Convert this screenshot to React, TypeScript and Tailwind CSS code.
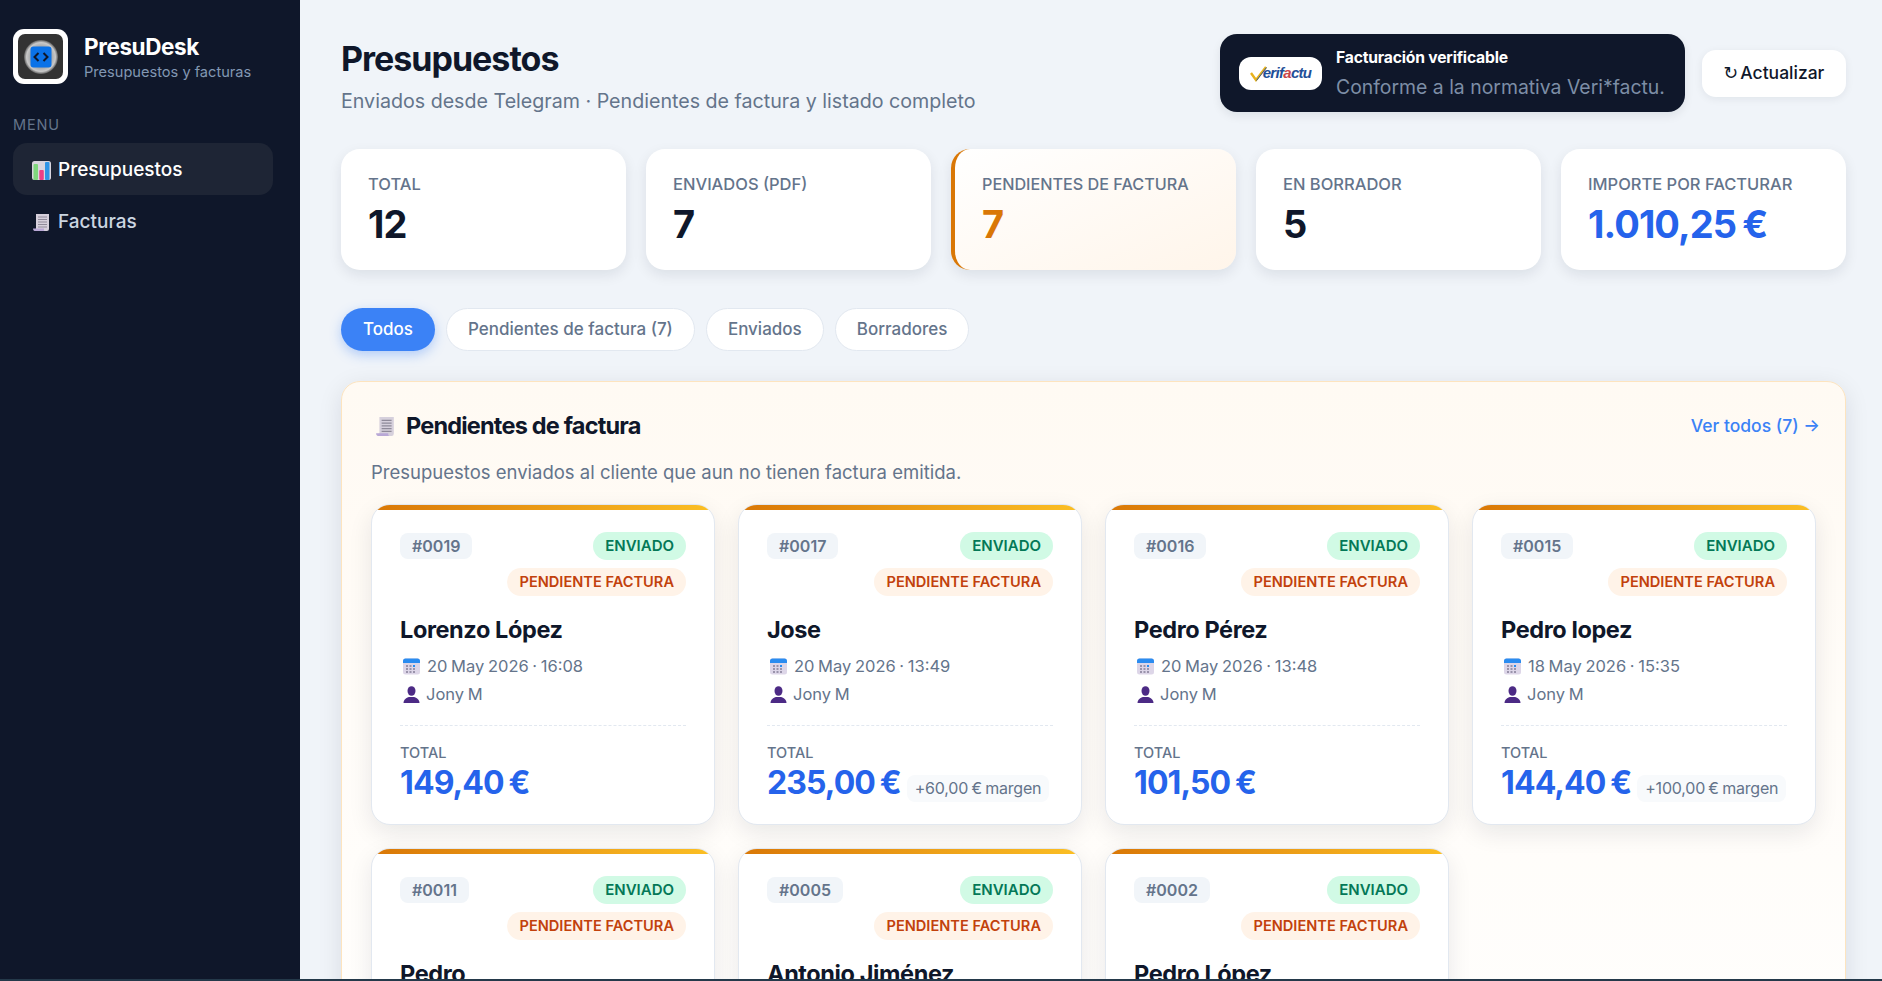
import React from 'react';

const font = { fontFamily: 'Inter, "Noto Sans", sans-serif' };

const stats = [
  { label: 'TOTAL', value: '12', tone: 'text-[#0f172a]' },
  { label: 'ENVIADOS (PDF)', value: '7', tone: 'text-[#0f172a]' },
  { label: 'PENDIENTES DE FACTURA', value: '7', tone: 'text-[#d97706]', accent: true },
  { label: 'EN BORRADOR', value: '5', tone: 'text-[#0f172a]' },
  { label: 'IMPORTE POR FACTURAR', value: '1.010,25 €', tone: 'text-[#2563eb]' },
];

const cards = [
  { id: '#0019', name: 'Lorenzo López', date: '20 May 2026 · 16:08', total: '149,40 €' },
  { id: '#0017', name: 'Jose', date: '20 May 2026 · 13:49', total: '235,00 €', margin: '+60,00 € margen' },
  { id: '#0016', name: 'Pedro Pérez', date: '20 May 2026 · 13:48', total: '101,50 €' },
  { id: '#0015', name: 'Pedro lopez', date: '18 May 2026 · 15:35', total: '144,40 €', margin: '+100,00 € margen' },
  { id: '#0011', name: 'Pedro', date: '15 May 2026 · 10:12', total: '98,00 €' },
  { id: '#0005', name: 'Antonio Jiménez', date: '12 May 2026 · 09:30', total: '120,00 €' },
  { id: '#0002', name: 'Pedro López', date: '10 May 2026 · 12:20', total: '162,45 €' },
];

const ChartIcon = () => (
  <svg width="19" height="19" viewBox="0 0 19 19" className="shrink-0">
    <rect width="19" height="19" rx="2.5" fill="#d9d5de" />
    <rect x="1.5" y="3" width="4.5" height="16" rx="1" fill="#7fd67c" />
    <rect x="7.3" y="9" width="4.5" height="10" rx="1" fill="#ec3f86" />
    <rect x="13" y="1" width="4.5" height="18" rx="1" fill="#2f95e6" />
  </svg>
);

const ScrollIcon = ({ size = 19 }: { size?: number }) => (
  <svg width={size} height={size} viewBox="0 0 19 19" className="shrink-0">
    <path d="M4 1h13v15a2 2 0 0 1-2 2H1.5c1.5-.5 2.5-1 2.5-3z" fill="#d6d0dc" />
    <path d="M1 15.5h11v1.2c0 .8.5 1.3 1 1.3H3c-1.2 0-2-.9-2-2.5z" fill="#b9a8d6" />
    <path d="M6 4h9M6 6.5h9M6 9h9M6 11.500h9M6 14h9" stroke="#8f8a99" strokeWidth="1.100" />
  </svg>
);

const CalendarIcon = () => (
  <svg width="17" height="17" viewBox="0 0 17 17" className="shrink-0">
    <rect y="0.500" width="17" height="16" rx="2.500" fill="#ddd6e8" />
    <path d="M0 5V3a2.500 2.500 0 0 1 2.500-2.500h12A2.500 2.500 0 0 1 17 3v2z" fill="#2b8cf0" />
    <g fill="#9a93ab">
      <rect x="3" y="7" width="2" height="2" />
      <rect x="6.500" y="7" width="2" height="2" />
      <rect x="3" y="10" width="2" height="2" />
      <rect x="6.500" y="10" width="2" height="2" />
      <rect x="10" y="10" width="2" height="2" />
      <rect x="3" y="13" width="2" height="2" />
      <rect x="6.500" y="13" width="2" height="2" />
      <rect x="10" y="13" width="2" height="2" />
    </g>
    <rect x="10" y="7" width="2" height="2" fill="#2b8cf0" />
  </svg>
);

const PersonIcon = () => (
  <svg width="17" height="17" viewBox="0 0 17 17" className="shrink-0">
    <ellipse cx="8.500" cy="5" rx="4" ry="4.800" fill="#4c2a85" />
    <path d="M0.500 17c0-3.500 3-5.500 5.500-6h5c2.500.5 5.500 2.500 5.500 6z" fill="#4c2a85" />
  </svg>
);

const AppLogo = () => (
  <svg width="55" height="55" viewBox="0 0 55 55" className="shrink-0">
    <defs>
      <radialGradient id="halo">
        <stop offset="45%" stopColor="#8d9094" />
        <stop offset="85%" stopColor="#c9c9c9" />
        <stop offset="100%" stopColor="#5d5d5d" />
      </radialGradient>
    </defs>
    <rect width="55" height="55" rx="11" fill="#ffffff" />
    <rect x="5" y="5" width="45" height="45" rx="7" fill="#333333" />
    <circle cx="28" cy="28" r="17" fill="url(#halo)" />
    <rect x="17.500" y="17.500" width="21" height="21" rx="3" fill="#0a72e8" />
    <path d="M25.500 24l-4 4 4 4M30.500 24l4 4-4 4" fill="none" stroke="#0f172a" strokeWidth="2" />
  </svg>
);

const VerifactuLogo = () => (
  <div className="flex h-[33px] w-[83px] shrink-0 items-center justify-center rounded-xl bg-white">
    <svg width="18" height="17" viewBox="0 0 18 17" className="-mr-[5px] shrink-0">
      <path d="M1 8l5 7 10-13" fill="none" stroke="#e8b21c" strokeWidth="2.400" />
      <path d="M6.500 15.500L16.500 2.500" fill="none" stroke="#1f4f98" strokeWidth="0.900" />
    </svg>
    <span className="relative text-[15px] font-bold italic tracking-[-0.7px] text-[#1f4f98]" style={{ fontFamily: '"Liberation Sans", sans-serif' }}>
      erif<span className="text-[#c8464a]">a</span>ctu
    </span>
  </div>
);

const StatCard = ({ label, value, tone, accent }: { label: string; value: string; tone: string; accent?: boolean }) => (
  <div
    className={`flex h-[121px] flex-col rounded-[19px] pt-[24px] shadow-[0_5px_14px_rgba(15,23,42,0.09)] ${
      accent
        ? 'border-l-[4px] border-[#d97706] bg-gradient-to-br from-white to-[#fff5ea] pl-[27px]'
        : 'bg-white pl-[27px]'
    }`}
  >
    <div className={`leading-[22px] font-medium text-[#64748b] ${accent ? 'text-[16.200px]' : 'text-[16.500px]'}`}>{label}</div>
    <div className={`mt-[6px] text-[38px] leading-[46px] font-bold tracking-[-0.9px] [word-spacing:-2px] ${tone}`}>{value}</div>
  </div>
);

const Tab = ({ children, active }: { children: React.ReactNode; active?: boolean }) => (
  <button
    className={`flex h-[43px] items-center rounded-full pt-px text-[17px] font-medium ${
      active
        ? 'bg-[#3b82f6] px-[22px] text-white shadow-[0_4px_12px_rgba(59,130,246,0.35)]'
        : 'border border-[#e2e8f0] bg-white px-[21px] text-[#64748b]'
    }`}
  >
    {children}
  </button>
);

const BudgetCard = ({ id, name, date, total, margin }: { id: string; name: string; date: string; total: string; margin?: string }) => (
  <div className="h-[321px] overflow-hidden rounded-[19px] border border-[#e2e8f0] bg-white shadow-[0_8px_24px_rgba(15,23,42,0.09)]">
    <div className="h-[5px] bg-gradient-to-r from-[#d97706] to-[#fbbf24]" />
    <div className="px-[28px] pt-[22px]">
      <div className="flex items-start justify-between">
        <span className="mt-px rounded-lg bg-[#f1f5f9] px-[12px] text-[16px] leading-[26px] font-semibold text-[#64748b]">{id}</span>
        <div className="flex flex-col items-end gap-[8px]">
          <span className="rounded-full bg-[#d1fae5] px-[12px] text-[15px] leading-[28px] font-semibold text-[#047857]">ENVIADO</span>
          <span className="rounded-full bg-[#fff3e8] px-[12px] text-[14.600px] leading-[28px] font-semibold text-[#c2410c]">PENDIENTE FACTURA</span>
        </div>
      </div>
      <div className="mt-[17px] text-[23.500px] leading-[34px] font-bold tracking-[-0.4px] text-[#0f172a]">{name}</div>
      <div className="mt-[5px] flex h-[28px] items-center gap-[7px] pl-[3px] text-[16.500px] text-[#64748b] [word-spacing:-1px]">
        <CalendarIcon />
        <span>{date}</span>
      </div>
      <div className="flex h-[28px] items-center gap-[6px] pl-[3px] text-[16.500px] text-[#64748b] [word-spacing:-1px]">
        <PersonIcon />
        <span>Jony M</span>
      </div>
      <div className="mt-[17px] border-t border-dashed border-[#e2e8f0] pt-[17px]">
        <div className="text-[14.500px] leading-[19px] font-medium text-[#64748b]">TOTAL</div>
        <div className="flex items-center gap-[6px] whitespace-nowrap">
          <span className="text-[32px] leading-[42px] font-bold tracking-[-0.9px] text-[#2563eb] [word-spacing:-2px]">{total}</span>
          {margin && (
            <span className="mt-[10px] rounded-lg bg-[#f8fafc] px-[8px] text-[16px] leading-[27px] tracking-[-0.2px] text-[#64748b] [word-spacing:-1px]">{margin}</span>
          )}
        </div>
      </div>
    </div>
  </div>
);

export default function App() {
  return (
    <div className="flex h-screen flex-col overflow-hidden bg-[#f0f4f9]" style={font}>
      <div className="flex min-h-0 flex-1">
        {/* Sidebar */}
        <aside className="w-[300px] shrink-0 bg-[#0f172a] px-[13px] pt-[29px]">
          <div className="flex items-center gap-[16px]">
            <AppLogo />
            <div>
              <div className="mt-[2px] text-[22.500px] leading-[27px] font-bold tracking-[-0.4px] text-white">PresuDesk</div>
              <div className="mt-[2px] text-[14.600px] leading-[20px] text-[#8297b3]">Presupuestos y facturas</div>
            </div>
          </div>
          <div className="mt-[32px] text-[14.500px] leading-[18px] tracking-[0.8px] text-[#64748b]">MENU</div>
          <nav className="mt-[9px] w-[260px]">
            <a className="flex h-[52px] items-center gap-[7px] rounded-[14px] bg-[#1e2535] pt-[3px] pl-[19px] text-[19px] font-medium text-white">
              <ChartIcon />
              Presupuestos
            </a>
            <a className="flex h-[52px] items-center gap-[7px] pt-[3px] pl-[19px] text-[19px] font-medium text-[#cbd5e1]">
              <ScrollIcon />
              Facturas
            </a>
          </nav>
        </aside>

        {/* Main */}
        <main className="min-w-0 flex-1 overflow-hidden pt-[34px] pr-[36px] pl-[41px]">
          <header className="flex items-start justify-between">
            <div>
              <h1 className="mt-[3px] text-[34px] leading-[44px] font-bold tracking-[-1px] text-[#0f172a]">Presupuestos</h1>
              <p className="mt-[6px] text-[19.650px] leading-[28px] text-[#64748b]">
                Enviados desde Telegram · Pendientes de factura y listado completo
              </p>
            </div>
            <div className="flex items-center gap-[17px]">
              <div className="flex h-[78px] w-[465px] items-center gap-[14px] rounded-[17px] bg-[#0f172a] pl-[19px] shadow-[0_4px_10px_rgba(15,23,42,0.08)]">
                <VerifactuLogo />
                <div>
                  <div className="text-[15.700px] leading-[22px] font-bold tracking-[-0.2px] text-white">Facturación verificable</div>
                  <div className="mt-[5px] text-[19.400px] leading-[26px] text-[#7d8ea6]">Conforme a la normativa Veri*factu.</div>
                </div>
              </div>
              <button className="flex h-[47px] w-[144px] items-center justify-center gap-[2px] rounded-[14px] bg-white text-[17.500px] font-medium text-[#0f172a] shadow-[0_2px_8px_rgba(15,23,42,0.07)]">
                <span style={{ fontFamily: '"DejaVu Sans", sans-serif' }}>↻</span>
                Actualizar
              </button>
            </div>
          </header>

          <section className="mt-[34px] grid grid-cols-5 gap-[20px]">
            {stats.map((s) => (
              <StatCard key={s.label} {...s} />
            ))}
          </section>

          <div className="mt-[38px] flex gap-[11px]">
            <Tab active>Todos</Tab>
            <Tab>Pendientes de factura (7)</Tab>
            <Tab>Enviados</Tab>
            <Tab>Borradores</Tab>
          </div>

          <section className="mt-[30px] rounded-[19px] border border-[#fde4bf] bg-gradient-to-b from-[#fffaf3] to-white px-[29px] pt-[26px] pb-[30px] shadow-[0_6px_24px_rgba(15,23,42,0.1)]">
            <div className="flex items-center justify-between">
              <h2 className="flex items-center gap-[10px] pl-[4px] text-[23.500px] leading-[36px] font-bold tracking-[-0.8px] text-[#0f172a]">
                <ScrollIcon size={21} />
                Pendientes de factura
              </h2>
              <a className="-mr-[4px] text-[17.500px] font-medium text-[#3b82f6]">Ver todos (7) →</a>
            </div>
            <p className="mt-[14px] text-[18.500px] leading-[28px] text-[#64748b]">
              Presupuestos enviados al cliente que aun no tienen factura emitida.
            </p>
            <div className="mt-[18px] grid grid-cols-4 gap-[23px]">
              {cards.map((c) => (
                <BudgetCard key={c.id} {...c} />
              ))}
            </div>
          </section>
        </main>
      </div>
      <div className="h-[2px] shrink-0 bg-[#24394a]" />
    </div>
  );
}
